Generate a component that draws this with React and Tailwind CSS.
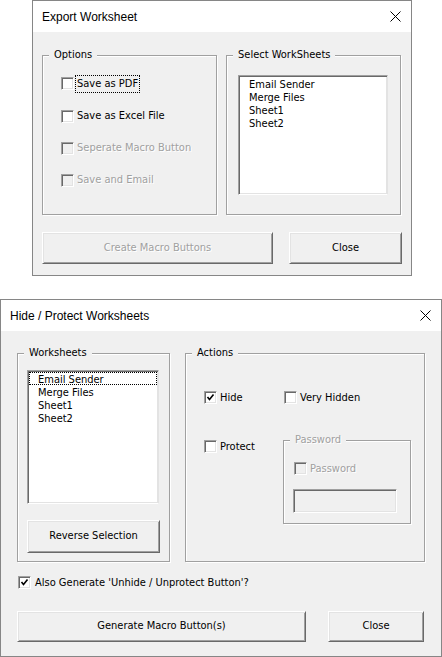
import React from "react";

const bodyFont = { fontFamily: '"DejaVu Sans Condensed", "Liberation Sans", sans-serif' };

function CloseIcon() {
  return (
    <svg width="11" height="11" viewBox="0 0 11 11" className="block">
      <path d="M0.5 0.5 L10.5 10.5 M10.5 0.5 L0.5 10.5" stroke="#000" strokeWidth="1" fill="none" />
    </svg>
  );
}

function Win({ title, className, children }) {
  return (
    <div className={`border border-[#868686] bg-[#f0f0f0] ${className}`}>
      <div className="h-[31px] bg-white flex items-center justify-between pl-[9px] pr-[10px]">
        <span className="text-[12px] text-black font-['Liberation_Sans',sans-serif]">{title}</span>
        <CloseIcon />
      </div>
      {children}
    </div>
  );
}

function Frame({ label, disabled, className, children }) {
  return (
    <div className={`relative border border-[#a0a0a0] shadow-[1px_1px_0_#fff,inset_1px_1px_0_#fff] ${className}`}>
      <span
        className={`absolute left-[6px] -top-[8px] px-[5px] bg-[#f0f0f0] text-[11px] leading-[13px] whitespace-nowrap ${
          disabled ? "text-[#a0a0a0] [text-shadow:1px_1px_0_#fff]" : "text-black"
        }`}
      >
        {label}
      </span>
      {children}
    </div>
  );
}

function Check({ label, checked, disabled, focus, gap = "ml-[1px]" }) {
  return (
    <div className="flex items-center">
      <div
        className={`w-[13px] h-[13px] shrink-0 border border-t-[#a0a0a0] border-l-[#a0a0a0] border-b-white border-r-white shadow-[inset_1px_1px_0_#696969,inset_-1px_-1px_0_#e3e3e3] flex items-center justify-center ${
          disabled ? "bg-[#f0f0f0]" : "bg-white"
        }`}
      >
        {checked && (
          <svg width="9" height="9" viewBox="0 0 9 9" className="block">
            <path d="M1.5 4 L3.5 6.5 L7.5 1.5" stroke="#000" strokeWidth="1.6" fill="none" />
          </svg>
        )}
      </div>
      <span
        className={`${gap} text-[11px] leading-[16px] whitespace-nowrap px-[1px] ${
          focus ? "border border-dotted border-black" : "border border-transparent"
        } ${disabled ? "text-[#a0a0a0] [text-shadow:1px_1px_0_#fff]" : "text-black"}`}
      >
        {label}
      </span>
    </div>
  );
}

function Btn({ label, disabled, className }) {
  return (
    <button
      className={`border border-t-white border-l-white border-b-[#696969] border-r-[#696969] shadow-[inset_1px_1px_0_#e3e3e3,inset_-1px_-1px_0_#a0a0a0] bg-[#f0f0f0] text-[11px] flex items-center justify-center ${
        disabled ? "text-[#a0a0a0] [text-shadow:1px_1px_0_#fff]" : "text-black"
      } ${className}`}
    >
      {label}
    </button>
  );
}

function ListBox({ items, focusFirst, className }) {
  return (
    <div
      className={`bg-white border border-t-[#a0a0a0] border-l-[#a0a0a0] border-b-white border-r-[#e3e3e3] shadow-[inset_1px_1px_0_#696969,inset_-1px_-1px_0_#e3e3e3] p-[1px] ${className}`}
    >
      {items.map((it, i) => (
        <div
          key={it}
          className={`h-[13px] leading-[13px] text-[11px] text-black pl-[8px] ${
            focusFirst && i === 0 ? "border border-dotted border-black" : "border border-transparent"
          }`}
        >
          {it}
        </div>
      ))}
    </div>
  );
}

const sheets = ["Email Sender", "Merge Files", "Sheet1", "Sheet2"];

export default function App() {
  return (
    <div className="w-[442px] h-[657px] bg-white" style={bodyFont}>
      <Win title="Export Worksheet" className="ml-[32px] w-[380px]">
        <div className="pt-[23px] pl-[9px] pb-[11px]">
          <div className="flex gap-[9px]">
            <Frame label="Options" className="w-[175px] h-[160px]">
              <div className="pl-[18px] pt-[11px]">
                <div className="h-[33px] flex items-center">
                  <Check label="Save as PDF" focus />
                </div>
                <div className="h-[32px] flex items-center">
                  <Check label="Save as Excel File" />
                </div>
                <div className="h-[32px] flex items-center">
                  <Check label="Seperate Macro Button" disabled />
                </div>
                <div className="h-[32px] flex items-center">
                  <Check label="Save and Email" disabled />
                </div>
              </div>
            </Frame>
            <Frame label="Select WorkSheets" className="w-[175px] h-[160px]">
              <ListBox items={sheets} className="ml-[11px] mt-[19px] w-[150px] h-[120px]" />
            </Frame>
          </div>
          <div className="flex mt-[17px]">
            <Btn label="Create Macro Buttons" disabled className="w-[231px] h-[32px]" />
            <Btn label="Close" className="ml-[16px] w-[113px] h-[32px]" />
          </div>
        </div>
      </Win>

      <Win title="Hide / Protect Worksheets" className="mt-[23px] w-[442px]">
        <div className="pt-[22px] pl-[16px] pb-[14px]">
          <div className="flex gap-[15px]">
            <Frame label="Worksheets" className="w-[153px] h-[209px]">
              <ListBox items={sheets} focusFirst className="ml-[9px] mt-[16px] w-[132px] h-[134px]" />
              <Btn label="Reverse Selection" className="ml-[9px] mt-[16px] w-[133px] h-[33px]" />
            </Frame>
            <Frame label="Actions" className="w-[240px] h-[209px]">
              <div className="pl-[18px] pt-[37px]">
                <div className="flex items-center h-[13px]">
                  <div className="w-[80px]">
                    <Check label="Hide" checked />
                  </div>
                  <Check label="Very Hidden" />
                </div>
                <div className="flex items-start mt-[36px]">
                  <div className="w-[79px] h-[13px] flex items-center">
                    <Check label="Protect" />
                  </div>
                  <Frame label="Password" disabled className="w-[128px] h-[84px]">
                    <div className="pl-[10px] pt-[21px]">
                      <div className="h-[13px] flex items-center">
                        <Check label="Password" disabled />
                      </div>
                      <div className="mt-[14px] -ml-[1px] w-[104px] h-[24px] bg-[#f0f0f0] border border-t-[#a0a0a0] border-l-[#a0a0a0] border-b-white border-r-white shadow-[inset_1px_1px_0_#696969,inset_-1px_-1px_0_#e3e3e3]" />
                    </div>
                  </Frame>
                </div>
              </div>
            </Frame>
          </div>
          <div className="mt-[14px] ml-[1px] h-[13px] flex items-center">
            <Check label="Also Generate 'Unhide / Unprotect Button'?" checked gap="ml-[2px]" />
          </div>
          <div className="flex mt-[22px]">
            <Btn label="Generate Macro Button(s)" className="w-[289px] h-[31px]" />
            <Btn label="Close" className="ml-[22px] w-[96px] h-[31px]" />
          </div>
        </div>
      </Win>
    </div>
  );
}
